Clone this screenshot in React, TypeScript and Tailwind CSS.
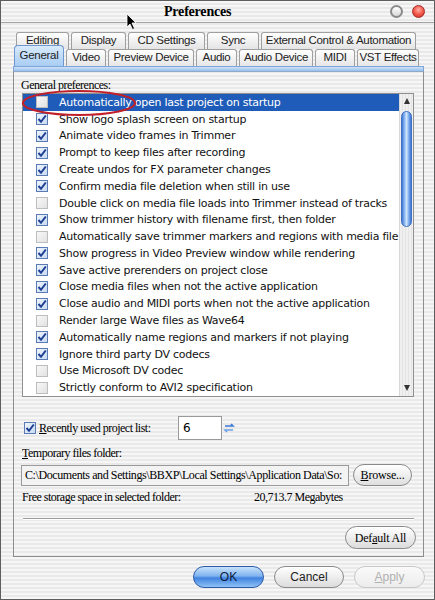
import React from "react";

const rows: { label: string; checked: boolean }[] = [
  { label: "Automatically open last project on startup", checked: false },
  { label: "Show logo splash screen on startup", checked: true },
  { label: "Animate video frames in Trimmer", checked: true },
  { label: "Prompt to keep files after recording", checked: true },
  { label: "Create undos for FX parameter changes", checked: true },
  { label: "Confirm media file deletion when still in use", checked: true },
  { label: "Double click on media file loads into Trimmer instead of tracks", checked: false },
  { label: "Show trimmer history with filename first, then folder", checked: true },
  { label: "Automatically save trimmer markers and regions with media file", checked: false },
  { label: "Show progress in Video Preview window while rendering", checked: true },
  { label: "Save active prerenders on project close", checked: true },
  { label: "Close media files when not the active application", checked: true },
  { label: "Close audio and MIDI ports when not the active application", checked: true },
  { label: "Render large Wave files as Wave64", checked: false },
  { label: "Automatically name regions and markers if not playing", checked: true },
  { label: "Ignore third party DV codecs", checked: true },
  { label: "Use Microsoft DV codec", checked: false },
  { label: "Strictly conform to AVI2 specification", checked: false },
];

const backTabs = [
  { label: "Editing", w: "w-[53px]" },
  { label: "Display", w: "w-[55px]" },
  { label: "CD Settings", w: "w-[77px]" },
  { label: "Sync", w: "w-[52px]" },
  { label: "External Control & Automation", w: "w-[155px]" },
];

const frontTabs = [
  { label: "Video", w: "w-[40px]" },
  { label: "Preview Device", w: "w-[86px]" },
  { label: "Audio", w: "w-[41px]" },
  { label: "Audio Device", w: "w-[74px]" },
  { label: "MIDI", w: "w-[40px]" },
  { label: "VST Effects", w: "w-[62px]" },
];

function Check({ checked }: { checked: boolean }) {
  if (checked) {
    return (
      <div className="w-[12px] h-[12px] shrink-0 border border-[#5b7bb5] bg-gradient-to-br from-[#eef4fc] to-[#c9daf2] flex items-center justify-center">
        <svg width="10" height="10" viewBox="0 0 10 10">
          <path d="M1.5 5 L4 7.8 L8.8 1.5" fill="none" stroke="#1c3f95" strokeWidth="2" />
        </svg>
      </div>
    );
  }
  return (
    <div className="w-[12px] h-[12px] shrink-0 border border-[#bdbdbd] bg-gradient-to-br from-[#f8f8f8] to-[#e2e2e2]" />
  );
}

export default function App() {
  return (
    <div className="relative w-[435px] h-[600px] overflow-hidden border border-[#5e5e5e] bg-[repeating-linear-gradient(to_bottom,#f6f6f6_0px,#f6f6f6_2px,#e9e9e9_2px,#e9e9e9_4px)] flex flex-col font-['Liberation_Sans',sans-serif] text-black">
      {/* Title bar */}
      <div className="h-[22px] shrink-0 flex items-center border-b border-[#a4a4a4]">
        <div className="pl-[163px] font-['Liberation_Serif',serif] font-bold text-[14px] leading-none tracking-[-0.2px]">
          Preferences
        </div>
        <div className="ml-auto mr-[9px] flex items-center gap-[9px]">
          <div className="w-[13px] h-[13px] rounded-full border-[2px] border-[#8a8a8a] bg-gradient-to-b from-[#ffffff] to-[#d8d8d8]" />
          <div className="w-[13px] h-[13px] rounded-full border border-[#a32a2a] bg-[radial-gradient(circle_at_50%_35%,#ffb0a8_0%,#f25a4c_50%,#c8281e_100%)]" />
        </div>
      </div>

      {/* Tabs */}
      <div className="mt-[9px] pl-[15px] flex gap-[2px] h-[17px] text-[11.5px] text-[#222]">
        {backTabs.map((t) => (
          <div
            key={t.label}
            className={`${t.w} h-[17px] border border-b-0 border-[#9f9f9f] rounded-t-[3px] bg-gradient-to-b from-[#ffffff] to-[#e4e4e4] flex items-center justify-center leading-none tracking-[-0.3px] whitespace-nowrap`}
          >
            {t.label}
          </div>
        ))}
      </div>
      <div className="relative pl-[13px] flex items-end gap-[2px] h-[17px] text-[11.5px] text-[#222]">
        <div className="w-[50px] h-[21px] -mt-[4px] border border-b-0 border-[#6f97cf] rounded-t-[4px] bg-gradient-to-b from-[#d9eafc] to-[#a8cdf3] flex items-center justify-center leading-none tracking-[-0.3px]">
          General
        </div>
        {frontTabs.map((t) => (
          <div
            key={t.label}
            className={`${t.w} h-[17px] border border-b-0 border-[#9f9f9f] rounded-t-[3px] bg-gradient-to-b from-[#ffffff] to-[#e6e6e6] flex items-center justify-center leading-none tracking-[-0.3px] whitespace-nowrap`}
          >
            {t.label}
          </div>
        ))}
      </div>

      {/* Panel */}
      <div className="ml-[12px] w-[411px] flex flex-col">
        <div className="h-[5px] border border-b-0 border-[#7ea3d6] bg-gradient-to-b from-[#cfe3f8] to-[#97c0ec]" />
        <div className="h-[486px] border border-t-[#8fa9cc] border-[#8d8d8d] flex flex-col px-[7px] font-['Liberation_Serif',serif] text-[12px] tracking-[-0.5px]">
          <div className="pt-[6px] leading-[14px]">General preferences:</div>
          {/* List box */}
          <div className="mt-[1px] ml-[1px] w-[392px] h-[304px] border border-[#8f8f8f] bg-white flex tracking-normal">
            <div className="flex-1 flex flex-col">
              {rows.map((r, i) => (
                <div
                  key={r.label}
                  className={`h-[16.9px] flex items-center pl-[13px] ${i === 0 ? "bg-[#1f5cb9] text-white" : "text-[#111]"}`}
                >
                  <Check checked={r.checked} />
                  <span className="ml-[11px] font-['DejaVu_Sans',sans-serif] text-[11px] leading-none whitespace-nowrap tracking-[-0.25px]">
                    {r.label}
                  </span>
                </div>
              ))}
            </div>
            {/* Scrollbar */}
            <div className="w-[14px] shrink-0 bg-[repeating-linear-gradient(to_right,#f0f0f0_0px,#f0f0f0_2px,#e4e4e4_2px,#e4e4e4_3px)] border-l border-[#d8d8d8] flex flex-col items-center">
              <svg width="8" height="8" viewBox="0 0 8 8" className="mt-[3px]">
                <path d="M4 1 L7 7 L1 7 Z" fill="#333" />
              </svg>
              <div className="mt-[6px] w-[11px] h-[116px] rounded-full border border-[#3d6fc2] bg-[linear-gradient(to_right,#3f78d6_0%,#9fc6f5_35%,#cfe4fb_50%,#8db9f0_70%,#3b73d2_100%)]" />
              <div className="flex-1" />
              <svg width="8" height="8" viewBox="0 0 8 8" className="mb-[4px]">
                <path d="M1 1 L7 1 L4 7 Z" fill="#333" />
              </svg>
            </div>
          </div>

          {/* Recently used */}
          <div className="mt-[19px] flex items-center h-[24px]">
            <div className="ml-[3px]">
              <Check checked={true} />
            </div>
            <span className="ml-[3px] w-[139px] leading-none">
              <span className="underline">R</span>ecently used project list:
            </span>
            <div className="flex items-center">
              <div className="w-[44px] h-[24px] border border-[#9a9a9a] bg-white flex items-center pl-[4px] font-['DejaVu_Sans',sans-serif] text-[12px] tracking-normal">
                6
              </div>
              <svg width="12" height="20" viewBox="0 0 12 20" className="ml-[1px]">
                <path d="M2 8 L10 8 L8 6" fill="none" stroke="#3b78d8" strokeWidth="1.6" />
                <path d="M10 12 L2 12 L4 14" fill="none" stroke="#6da0e8" strokeWidth="1.6" />
              </svg>
            </div>
          </div>

          <div className="mt-[6px] ml-[1px] leading-[14px]">
            <span className="underline">T</span>emporary files folder:
          </div>
          <div className="mt-[4px] flex items-center">
            <div className="w-[328px] h-[21px] border border-[#9a9a9a] bg-[#f3f3f3] flex items-center pl-[3px] text-[12px] leading-none whitespace-nowrap overflow-hidden tracking-[-0.4px]">
              C:\Documents and Settings\BBXP\Local Settings\Application Data\So:
            </div>
            <div className="ml-[4px] w-[59px] h-[22px] rounded-full border border-[#8a8a8a] bg-gradient-to-b from-[#ffffff] to-[#dedede] flex items-center justify-center text-[12px] leading-none tracking-[-0.2px]">
              <span className="underline">B</span>rowse...
            </div>
          </div>
          <div className="mt-[4px] ml-[1px] flex leading-[14px]">
            <span className="w-[232px]">Free storage space in selected folder:</span>
            <span>20,713.7 Megabytes</span>
          </div>

          <div className="mt-[14px] ml-[2px] mr-[2px] border-t border-[#9d9d9d] border-b border-b-[#ffffff]" />

          <div className="mt-[6px] flex justify-end">
            <div className="w-[71px] h-[23px] rounded-full border border-[#8a8a8a] bg-gradient-to-b from-[#ffffff] to-[#dcdcdc] flex items-center justify-center text-[12px] leading-none tracking-[-0.2px]">
              Def<span className="underline">a</span>ult All
            </div>
          </div>
        </div>
      </div>

      {/* Bottom buttons */}
      <div className="mt-[9px] pl-[192px] flex gap-[10px] text-[12px]">
        <div className="w-[71px] h-[22px] rounded-full border border-[#2c5aa8] bg-[linear-gradient(to_bottom,#c9e2fb_0%,#7fb3ef_45%,#3f82df_55%,#8fc2f5_100%)] flex items-center justify-center text-[#0b1c3a]">
          OK
        </div>
        <div className="w-[70px] h-[22px] rounded-full border border-[#8a8a8a] bg-gradient-to-b from-[#ffffff] to-[#dcdcdc] flex items-center justify-center text-[#222]">
          Cancel
        </div>
        <div className="w-[71px] h-[22px] rounded-full border border-[#c8c8c8] bg-gradient-to-b from-[#fafafa] to-[#ececec] flex items-center justify-center text-[#b0b0b0]">
          <span className="underline">A</span>pply
        </div>
      </div>

      {/* Red annotation ellipse */}
      <svg className="absolute left-[20px] top-[87px]" width="120" height="30" viewBox="0 0 120 30">
        <ellipse cx="58" cy="15" rx="56" ry="12" fill="none" stroke="#c0202a" strokeWidth="2.2" />
      </svg>

      {/* Mouse cursor */}
      <svg className="absolute left-[125px] top-[12px]" width="12" height="18" viewBox="0 0 12 18">
        <path d="M1 1 L1 14 L4 11 L6.5 16.5 L8.5 15.5 L6 10 L10 10 Z" fill="#000" stroke="#fff" strokeWidth="0.8" />
      </svg>
    </div>
  );
}
